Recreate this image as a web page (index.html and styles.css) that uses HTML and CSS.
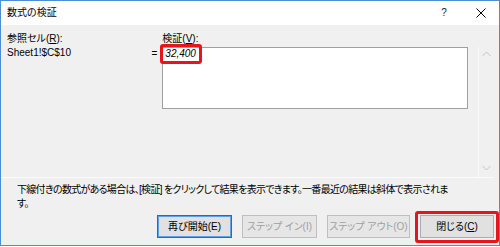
FILE: index.html
```html
<!DOCTYPE html>
<html lang="ja">
<head>
<meta charset="utf-8">
<title>数式の検証</title>
<link rel="stylesheet" href="styles.css">
</head>
<body>
<div class="window">
  <div class="titlebar">
    <span class="title">数式の検証</span>
    <span class="help">?</span>
    <span class="close"><svg width="10" height="10" viewBox="0 0 10 10"><path d="M0.5 0.5 L9.5 9.5 M9.5 0.5 L0.5 9.5" stroke="#000" stroke-width="1" fill="none"/></svg></span>
  </div>
  <div class="main">
    <div class="refcol">
      <div class="label">参照セル(<u>R</u>):</div>
      <div class="ref">Sheet1!$C$10</div>
    </div>
    <div class="eq">=</div>
    <div class="evalcol">
      <div class="label">検証(<u>V</u>):</div>
      <div class="evalbox">
        <span class="result">32,400</span>
        <span class="highlight"></span>
      </div>
    </div>
    <div class="scrollbar">
      <svg width="9" height="6" viewBox="0 0 9 6"><path d="M0.5 5 L4.5 1 L8.5 5" stroke="#c4c4c4" stroke-width="1" fill="none"/></svg>
      <svg width="9" height="6" viewBox="0 0 9 6"><path d="M0.5 1 L4.5 5 L8.5 1" stroke="#c4c4c4" stroke-width="1" fill="none"/></svg>
    </div>
  </div>
  <p class="note">下線付きの数式がある場合は、[検証] をクリックして結果を表示できます。一番最近の結果は斜体で表示されます。</p>
  <div class="buttons">
    <button class="btn default w75">再び開始(E)</button>
    <button class="btn w75" disabled>ステップ イン(I)</button>
    <button class="btn w83" disabled>ステップ アウト(O)</button>
    <span class="marked"><button class="btn w74">閉じる(<u>C</u>)</button></span>
  </div>
</div>
</body>
</html>
```
FILE: styles.css
```css
html, body {
  margin: 0;
  padding: 0;
  background: #ffffff;
}

.window {
  width: 500px;
  height: 246px;
  box-sizing: border-box;
  border: 1px solid #4a8fd6;
  background: #f0f0f0;
  display: flex;
  flex-direction: column;
  font-family: "Liberation Sans", "Noto Sans CJK JP", sans-serif;
  font-size: 10px;
  color: #000;
  font-feature-settings: "palt";
}

.titlebar {
  height: 24px;
  background: #ffffff;
  display: flex;
  align-items: center;
  padding-left: 6px;
  padding-right: 4px;
  flex-shrink: 0;
}

.title {
  flex: 1;
  line-height: 12px;
}

.help {
  width: 20px;
  text-align: center;
  line-height: 12px;
  color: #222;
}

.close {
  width: 28px;
  margin-left: 13px;
  display: flex;
  justify-content: center;
}

.main {
  height: 153px;
  box-sizing: border-box;
  border-bottom: 1px solid #fbfbfb;
  display: flex;
  align-items: flex-start;
  padding: 8px 0 0 6px;
  margin-right: 5px;
  flex-shrink: 0;
}

.label {
  line-height: 12px;
  margin-bottom: 2px;
}

.refcol {
  width: 145px;
}

.ref {
  line-height: 12px;
  margin-top: 1px;
}

.eq {
  width: 10px;
  margin-top: 15px;
  line-height: 12px;
}

.evalcol {
  width: 307px;
  margin-left: 1px;
}

.evalbox {
  position: relative;
  height: 62px;
  box-sizing: border-box;
  border: 1px solid #a0a0a0;
  background: #ffffff;
  padding: 0 2px;
}

.result {
  display: block;
  font-style: italic;
  line-height: 12px;
}

.highlight {
  position: absolute;
  left: -3px;
  top: -4px;
  width: 42px;
  height: 20px;
  box-sizing: border-box;
  border: 3px solid #e8141b;
  border-radius: 3px;
}

.scrollbar {
  width: 16px;
  height: 130px;
  margin-left: 10px;
  margin-top: 14px;
  box-sizing: border-box;
  border-left: 1px solid #fafafa;
  display: flex;
  flex-direction: column;
  justify-content: space-between;
  align-items: center;
  padding: 4px 0 6px;
}

.note {
  margin: 5px 0 0;
  padding-left: 16px;
  width: 436px;
  line-height: 14px;
  letter-spacing: -0.7px;
}

.buttons {
  display: flex;
  justify-content: flex-end;
  gap: 10px;
  padding-right: 5px;
  margin-top: 4px;
}

.btn {
  height: 23px;
  box-sizing: border-box;
  border: 1px solid #adadad;
  background: #e1e1e1;
  font: inherit;
  color: #000;
  line-height: 21px;
  padding: 0;
  text-align: center;
}

.btn.default {
  border-color: #0078d7;
  box-shadow: inset 0 0 0 1px #5aa3e8;
}

.btn:disabled {
  color: #a0a0a0;
  border-color: #bfbfbf;
  background: #e6e6e6;
}

.w75 { width: 75px; }
.w83 { width: 83px; }
.w74 { width: 74px; }

.marked {
  position: relative;
  display: flex;
}

.marked::after {
  content: "";
  position: absolute;
  left: -5px;
  right: -5px;
  top: -4px;
  bottom: -5px;
  border: 3px solid #e8141b;
  border-radius: 3px;
}
```
